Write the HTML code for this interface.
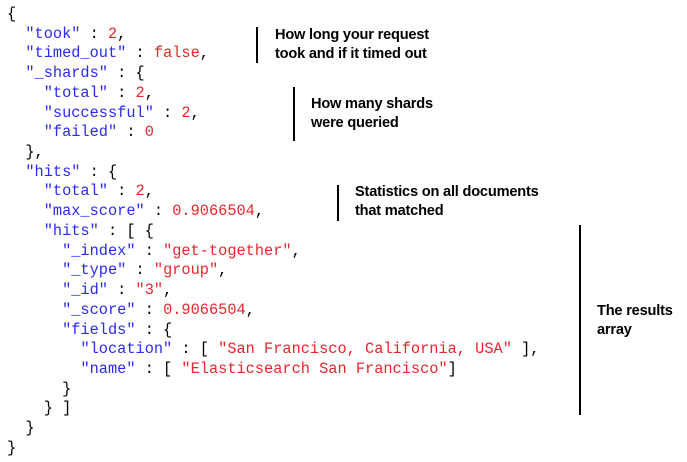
<!DOCTYPE html>
<html><head><style>
body{margin:0;background:#fff;width:687px;height:462px;position:relative;overflow:hidden}
pre{position:absolute;left:7px;top:5px;margin:0;font-family:"Liberation Mono",monospace;font-size:15.3px;line-height:19.72px;color:#000}
.k{color:#2b2bf0}.v{color:#e8262b}
.n{position:absolute;font-family:"Liberation Sans",sans-serif;font-weight:bold;font-size:14.6px;line-height:19px;color:#000;letter-spacing:-0.2px}
.l{position:absolute;width:1.5px;background:#000}
</style></head><body>
<pre>{
  <span class="k">"took"</span> : <span class="v">2</span>,
  <span class="k">"timed_out"</span> : <span class="v">false</span>,
  <span class="k">"_shards"</span> : {
    <span class="k">"total"</span> : <span class="v">2</span>,
    <span class="k">"successful"</span> : <span class="v">2</span>,
    <span class="k">"failed"</span> : <span class="v">0</span>
  },
  <span class="k">"hits"</span> : {
    <span class="k">"total"</span> : <span class="v">2</span>,
    <span class="k">"max_score"</span> : <span class="v">0.9066504</span>,
    <span class="k">"hits"</span> : [ {
      <span class="k">"_index"</span> : <span class="v">"get-together"</span>,
      <span class="k">"_type"</span> : <span class="v">"group"</span>,
      <span class="k">"_id"</span> : <span class="v">"3"</span>,
      <span class="k">"_score"</span> : <span class="v">0.9066504</span>,
      <span class="k">"fields"</span> : {
        <span class="k">"location"</span> : [ <span class="v">"San Francisco, California, USA"</span> ],
        <span class="k">"name"</span> : [ <span class="v">"Elasticsearch San Francisco"</span>]
      }
    } ]
  }
}</pre>
<div class="l" style="left:256px;top:27px;height:36px"></div>
<div class="n" style="left:275px;top:26px">How long your request<br>took and if it timed out</div>
<div class="l" style="left:293px;top:87px;height:54px"></div>
<div class="n" style="left:311px;top:95px">How many shards<br>were queried</div>
<div class="l" style="left:337px;top:185px;height:36px"></div>
<div class="n" style="left:355px;top:183px">Statistics on all documents<br>that matched</div>
<div class="l" style="left:579px;top:225px;height:190px"></div>
<div class="n" style="left:597px;top:302px">The results<br>array</div>
</body></html>
